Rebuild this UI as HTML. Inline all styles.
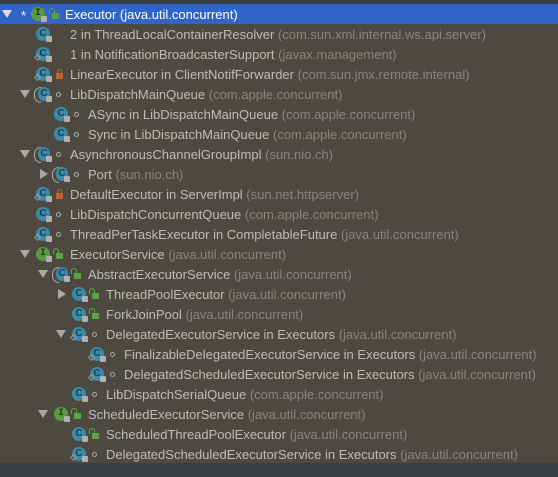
<!DOCTYPE html>
<html><head><meta charset="utf-8"><style>
*{margin:0;padding:0;box-sizing:border-box}
body{width:558px;height:477px;background:#4d4940;position:relative;overflow:hidden;font-family:"Liberation Sans",Arial,sans-serif;font-size:13px;color:#bcbcbc}
.top{position:absolute;left:0;top:0;width:558px;height:4px;background:#3c3f41}
.bot{position:absolute;left:0;top:463px;width:558px;height:14px;background:#3c3f41}
.row{position:absolute;left:0;width:558px;height:20px}
.sel{background:#2f64c8;color:#fff}
.arr{position:absolute;top:6px;width:0;height:0}
.ad{border-left:5px solid transparent;border-right:5px solid transparent;border-top:8px solid #a8a8a8}
.ar{top:5px;border-top:5px solid transparent;border-bottom:5px solid transparent;border-left:8px solid #a8a8a8}
.ic{position:absolute;top:3px;width:14px;height:14px;border-radius:50%;background:#3b8bab;color:#1d3f4d;font-size:10px;font-weight:bold;text-align:center;line-height:14px}
.ic.i{background:#5b9a43;color:#1f3a16;font-family:"Liberation Mono",monospace}
.ic.ab{width:12px;left:auto}
.ic.ab::before{content:"";position:absolute;left:-4px;top:0;width:6px;height:14px;border:1px solid #aaa;border-right:none;border-radius:7px 0 0 7px}
.lk{position:absolute;top:12px;width:6px;height:6px;background:#b0b0b0;border-radius:1px}
.an{position:absolute;top:11px;width:5px;height:5px;border:1px solid #999;transform:rotate(45deg)}
.md{position:absolute;top:6px;width:8px;height:8px}
.g{background:#5ea246;width:7px;height:6px;top:9px}
.g::before{content:"";position:absolute;left:-3px;top:-5px;width:4px;height:5px;border:1.5px solid #5ea246;border-bottom:none;border-radius:3px 3px 0 0}
.r{background:#c7602c;width:7px;height:6px;top:9px}
.r::before{content:"";position:absolute;left:1px;top:-4px;width:3px;height:4px;border:1.5px solid #c7602c;border-bottom:none;border-radius:3px 3px 0 0}
.d{width:5px;height:5px;border:1px solid #aaa;border-radius:50%;top:8px}
.t{position:absolute;top:3px;white-space:nowrap}
.p{color:#868686}
.sel .p{color:#fff}
</style></head><body>
<div class="top"></div>
<div id="rows"></div>
<div class="bot"></div>
<script>
var R=[
[1,0,'c','','2 in ThreadLocalContainerResolver','com.sun.xml.internal.ws.api.server','n'],
[1,0,'c','a','1 in NotificationBroadcasterSupport','javax.management','n'],
[1,0,'c','a','LinearExecutor in ClientNotifForwarder','com.sun.jmx.remote.internal','r'],
[1,'d','ab','','LibDispatchMainQueue','com.apple.concurrent','d'],
[2,0,'c','','ASync in LibDispatchMainQueue','com.apple.concurrent','d'],
[2,0,'c','','Sync in LibDispatchMainQueue','com.apple.concurrent','d'],
[1,'d','ab','','AsynchronousChannelGroupImpl','sun.nio.ch','d'],
[2,'r','ab','','Port','sun.nio.ch','d'],
[1,0,'c','a','DefaultExecutor in ServerImpl','sun.net.httpserver','r'],
[1,0,'c','','LibDispatchConcurrentQueue','com.apple.concurrent','d'],
[1,0,'c','a','ThreadPerTaskExecutor in CompletableFuture','java.util.concurrent','d'],
[1,'d','i','','ExecutorService','java.util.concurrent','g'],
[2,'d','ab','','AbstractExecutorService','java.util.concurrent','g'],
[3,'r','c','','ThreadPoolExecutor','java.util.concurrent','g'],
[3,0,'c','','ForkJoinPool','java.util.concurrent','g'],
[3,'d','c','a','DelegatedExecutorService in Executors','java.util.concurrent','d'],
[4,0,'c','a','FinalizableDelegatedExecutorService in Executors','java.util.concurrent','d'],
[4,0,'c','a','DelegatedScheduledExecutorService in Executors','java.util.concurrent','d'],
[3,0,'c','','LibDispatchSerialQueue','com.apple.concurrent','d'],
[2,'d','i','','ScheduledExecutorService','java.util.concurrent','g'],
[3,0,'c','','ScheduledThreadPoolExecutor','java.util.concurrent','g'],
[3,0,'c','a','DelegatedScheduledExecutorService in Executors','java.util.concurrent','d']
];
var h='<div class="row sel" style="top:4px"><div class="arr ad" style="left:2px;border-top-color:#ddd"></div><div class="t" style="left:21px;top:4px">*</div><div class="ic i" style="left:31px">I</div><div class="lk" style="left:41px"></div><div class="md g" style="left:52px"></div><div class="t" style="left:65px">Executor (java.util.concurrent)</div></div>';
R.forEach(function(r,k){
 var L=r[0],top=24+k*20,ix=18+18*L;
 var s='<div class="row" style="top:'+top+'px">';
 if(r[1]==='d')s+='<div class="arr ad" style="left:'+(2+18*L)+'px"></div>';
 if(r[1]==='r')s+='<div class="arr ar" style="left:'+(4+18*L)+'px"></div>';
 var cls=r[2]==='i'?'ic i':(r[2]==='ab'?'ic ab':'ic');
 var x=r[2]==='ab'?ix+2:ix;
 s+='<div class="'+cls+'" style="left:'+x+'px">'+(r[2]==='i'?'I':'C')+'</div>';
 if(r[3].indexOf('a')>=0)s+='<div class="an" style="left:'+(ix-1)+'px"></div>';
 s+='<div class="lk" style="left:'+(ix+10)+'px"></div>';
 if(r[6]!=='n')s+='<div class="md '+r[6]+'" style="left:'+(ix+20)+'px"></div>';
 s+='<div class="t" style="left:'+(ix+34)+'px">'+r[4]+' <span class="p">('+r[5]+')</span></div></div>';
 h+=s;
});
document.getElementById('rows').innerHTML=h;
</script>
</body></html>
